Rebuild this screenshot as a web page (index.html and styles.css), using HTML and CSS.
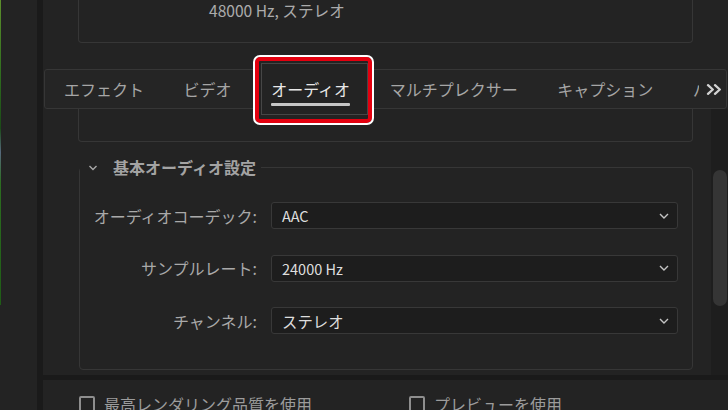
FILE: index.html
```html
<!DOCTYPE html>
<html lang="ja">
<head>
  <meta charset="UTF-8">
  <title>書き出し設定 - オーディオ</title>
  <link rel="stylesheet" href="styles.css">
</head>
<body>
  <div class="side"><div class="edge"></div></div>
  <div class="split"></div>

  <div class="panel">
    <div class="summary-area">
      <div class="summary">48000 Hz, ステレオ</div>
    </div>

    <div class="tabbar">
      <div class="tabs">
        <div class="tab">エフェクト</div>
        <div class="tab">ビデオ</div>
        <div class="tab active">オーディオ</div>
        <div class="tab">マルチプレクサー</div>
        <div class="tab">キャプション</div>
        <div class="tab">パブリッシュ</div>
      </div>
      <div class="more">
        <svg width="16" height="11" viewBox="0 0 16 11"><path d="M2 1.2 L6.8 5.5 L2 9.8 M9 1.2 L13.8 5.5 L9 9.8" fill="none" stroke="#d2d2d2" stroke-width="2.3" stroke-linecap="round" stroke-linejoin="round"/></svg>
      </div>
    </div>

    <div class="scroll">
      <div class="content">
        <div class="box-tail"></div>

        <!-- 基本オーディオ設定 -->
        <fieldset class="group">
          <legend><svg class="chev" width="10" height="6" viewBox="0 0 10 6"><path d="M1.5 1 L5 4.5 L8.5 1" fill="none" stroke="#a8a8a8" stroke-width="1.4"/></svg>基本オーディオ設定</legend>
          <div class="rows">
            <label>オーディオコーデック:</label>
            <div class="select"><span>AAC</span><svg width="10" height="6" viewBox="0 0 10 6"><path d="M1 1 L5 5 L9 1" fill="none" stroke="#c4c4c4" stroke-width="1.4"/></svg></div>
            <label>サンプルレート:</label>
            <div class="select"><span>24000 Hz</span><svg width="10" height="6" viewBox="0 0 10 6"><path d="M1 1 L5 5 L9 1" fill="none" stroke="#c4c4c4" stroke-width="1.4"/></svg></div>
            <label>チャンネル:</label>
            <div class="select"><span class="jp">ステレオ</span><svg width="10" height="6" viewBox="0 0 10 6"><path d="M1 1 L5 5 L9 1" fill="none" stroke="#c4c4c4" stroke-width="1.4"/></svg></div>
          </div>
        </fieldset>
      </div>
      <div class="scrollbar"><div class="thumb"></div></div>
    </div>

    <div class="rule"></div>

    <div class="footer">
      <label class="check"><span class="box"></span>最高レンダリング品質を使用</label>
      <label class="check"><span class="box"></span>プレビューを使用</label>
    </div>
  </div>

  <!-- 注釈の赤枠 -->
  <div class="callout"></div>
</body>
</html>
```

FILE: styles.css
```css
* {
  box-sizing: border-box;
}
html, body {
  margin: 0;
}
body {
  position: relative;
  display: flex;
  width: 728px;
  height: 410px;
  overflow: hidden;
  background: #232323;
  color: #a9a9a9;
  font-family: "Noto Sans CJK JP", "Noto Sans", sans-serif;
  font-size: 16px;
}

/* 左側のプレビュー領域 */
.side {
  width: 37px;
  flex: none;
}
.edge {
  width: 1px;
  height: 305px;
  background: linear-gradient(#5d8f2c 0%, #2e6c1e 25%, #1b4a17 42%, #56687c 50%, #2c6d20 60%, #1f5c16 100%);
}
.split {
  width: 6px;
  flex: none;
  background: #1a1a1a;
}

.panel {
  flex: 1;
  min-width: 0;
  display: flex;
  flex-direction: column;
}

/* 上部のサマリー */
.summary-area {
  height: 69px;
  flex: none;
  padding: 0 35px;
}
.summary {
  height: 43px;
  padding: 1px 0 0 130px;
  line-height: 19px;
  font-size: 15.6px;
  border: 1px solid #363636;
  border-top: none;
  border-radius: 0 0 4px 4px;
  color: #ababab;
}

/* タブ */
.tabbar {
  display: flex;
  height: 40px;
  flex: none;
  margin: 0 1px;
  border: 1px solid #363636;
  border-radius: 3px;
  background: #252525;
}
.tabs {
  flex: 1;
  display: flex;
  overflow: hidden;
  white-space: nowrap;
}
.tab {
  position: relative;
  flex: none;
  padding: 0 19.8px;
  line-height: 38px;
  color: #a6a6a6;
}
.tab:first-child {
  padding-left: 19px;
}
.tab.active {
  z-index: 2;
  color: #e8e8e8;
}
.tab.active::after {
  content: "";
  position: absolute;
  left: 19.8px;
  right: 19.8px;
  bottom: 2px;
  height: 3px;
  border-radius: 1px;
  background: #c6c6c6;
}
.more {
  width: 27px;
  flex: none;
  display: flex;
  align-items: center;
  justify-content: center;
  padding-left: 3px;
}

/* スクロール領域 */
.scroll {
  flex: 1;
  min-height: 0;
  display: flex;
}
.content {
  flex: 1;
  overflow: hidden;
  padding: 0 18px 0 35px;
}
.box-tail {
  height: 33px;
  border: 1px solid #363636;
  border-top: none;
  border-radius: 0 0 4px 4px;
}
.group {
  margin: 15px 0 0 1px;
  padding: 25px 14px 35px 0;
  min-width: 0;
  border: 1px solid #363636;
  border-radius: 4px;
}
.group legend {
  padding: 0 5px 0 8px;
  line-height: 20px;
  font-weight: bold;
  color: #a3a3a3;
}
.chev {
  margin-right: 15px;
  vertical-align: 3px;
}
.rows {
  display: grid;
  grid-template-columns: 177px 1fr;
  column-gap: 14px;
  row-gap: 25.5px;
  align-items: center;
}
.rows label {
  text-align: right;
  white-space: nowrap;
  color: #a9a9a9;
}
.select {
  height: 27px;
  display: flex;
  align-items: center;
  justify-content: space-between;
  padding: 0 8px 0 10px;
  background: #1d1d1d;
  border: 1px solid #383838;
  border-radius: 3px;
  color: #dedede;
  font-size: 14.5px;
}
.select .jp {
  font-size: 15.4px;
}

.scrollbar {
  width: 17px;
  flex: none;
  padding: 61px 1px 0 2px;
  background: #1e1e1e;
}
.thumb {
  height: 136px;
  border-radius: 7px;
  background: #353535;
}

.rule {
  height: 5px;
  flex: none;
  background: #1a1a1a;
}

/* 下部のチェックボックス */
.footer {
  height: 30px;
  flex: none;
  display: flex;
  gap: 97px;
  padding: 16px 0 0 36px;
  overflow: hidden;
}
.check {
  display: flex;
  align-items: flex-start;
  line-height: 17px;
  color: #9c9c9c;
  white-space: nowrap;
}
.check .box {
  width: 16px;
  height: 16px;
  margin-right: 9px;
  border: 2px solid #8e8e8e;
  border-radius: 2px;
}

/* 注釈 */
.callout {
  position: absolute;
  left: 253px;
  top: 55px;
  width: 121px;
  height: 70px;
  z-index: 1;
  border: 2px solid #fff;
  border-radius: 7px;
  box-shadow: inset 0 0 0 4px #e3000f;
  background: #232323;
}
.callout::after {
  content: "";
  position: absolute;
  left: 6px;
  top: 6px;
  right: 4px;
  bottom: 8px;
  border: 1px solid #464646;
}
```
